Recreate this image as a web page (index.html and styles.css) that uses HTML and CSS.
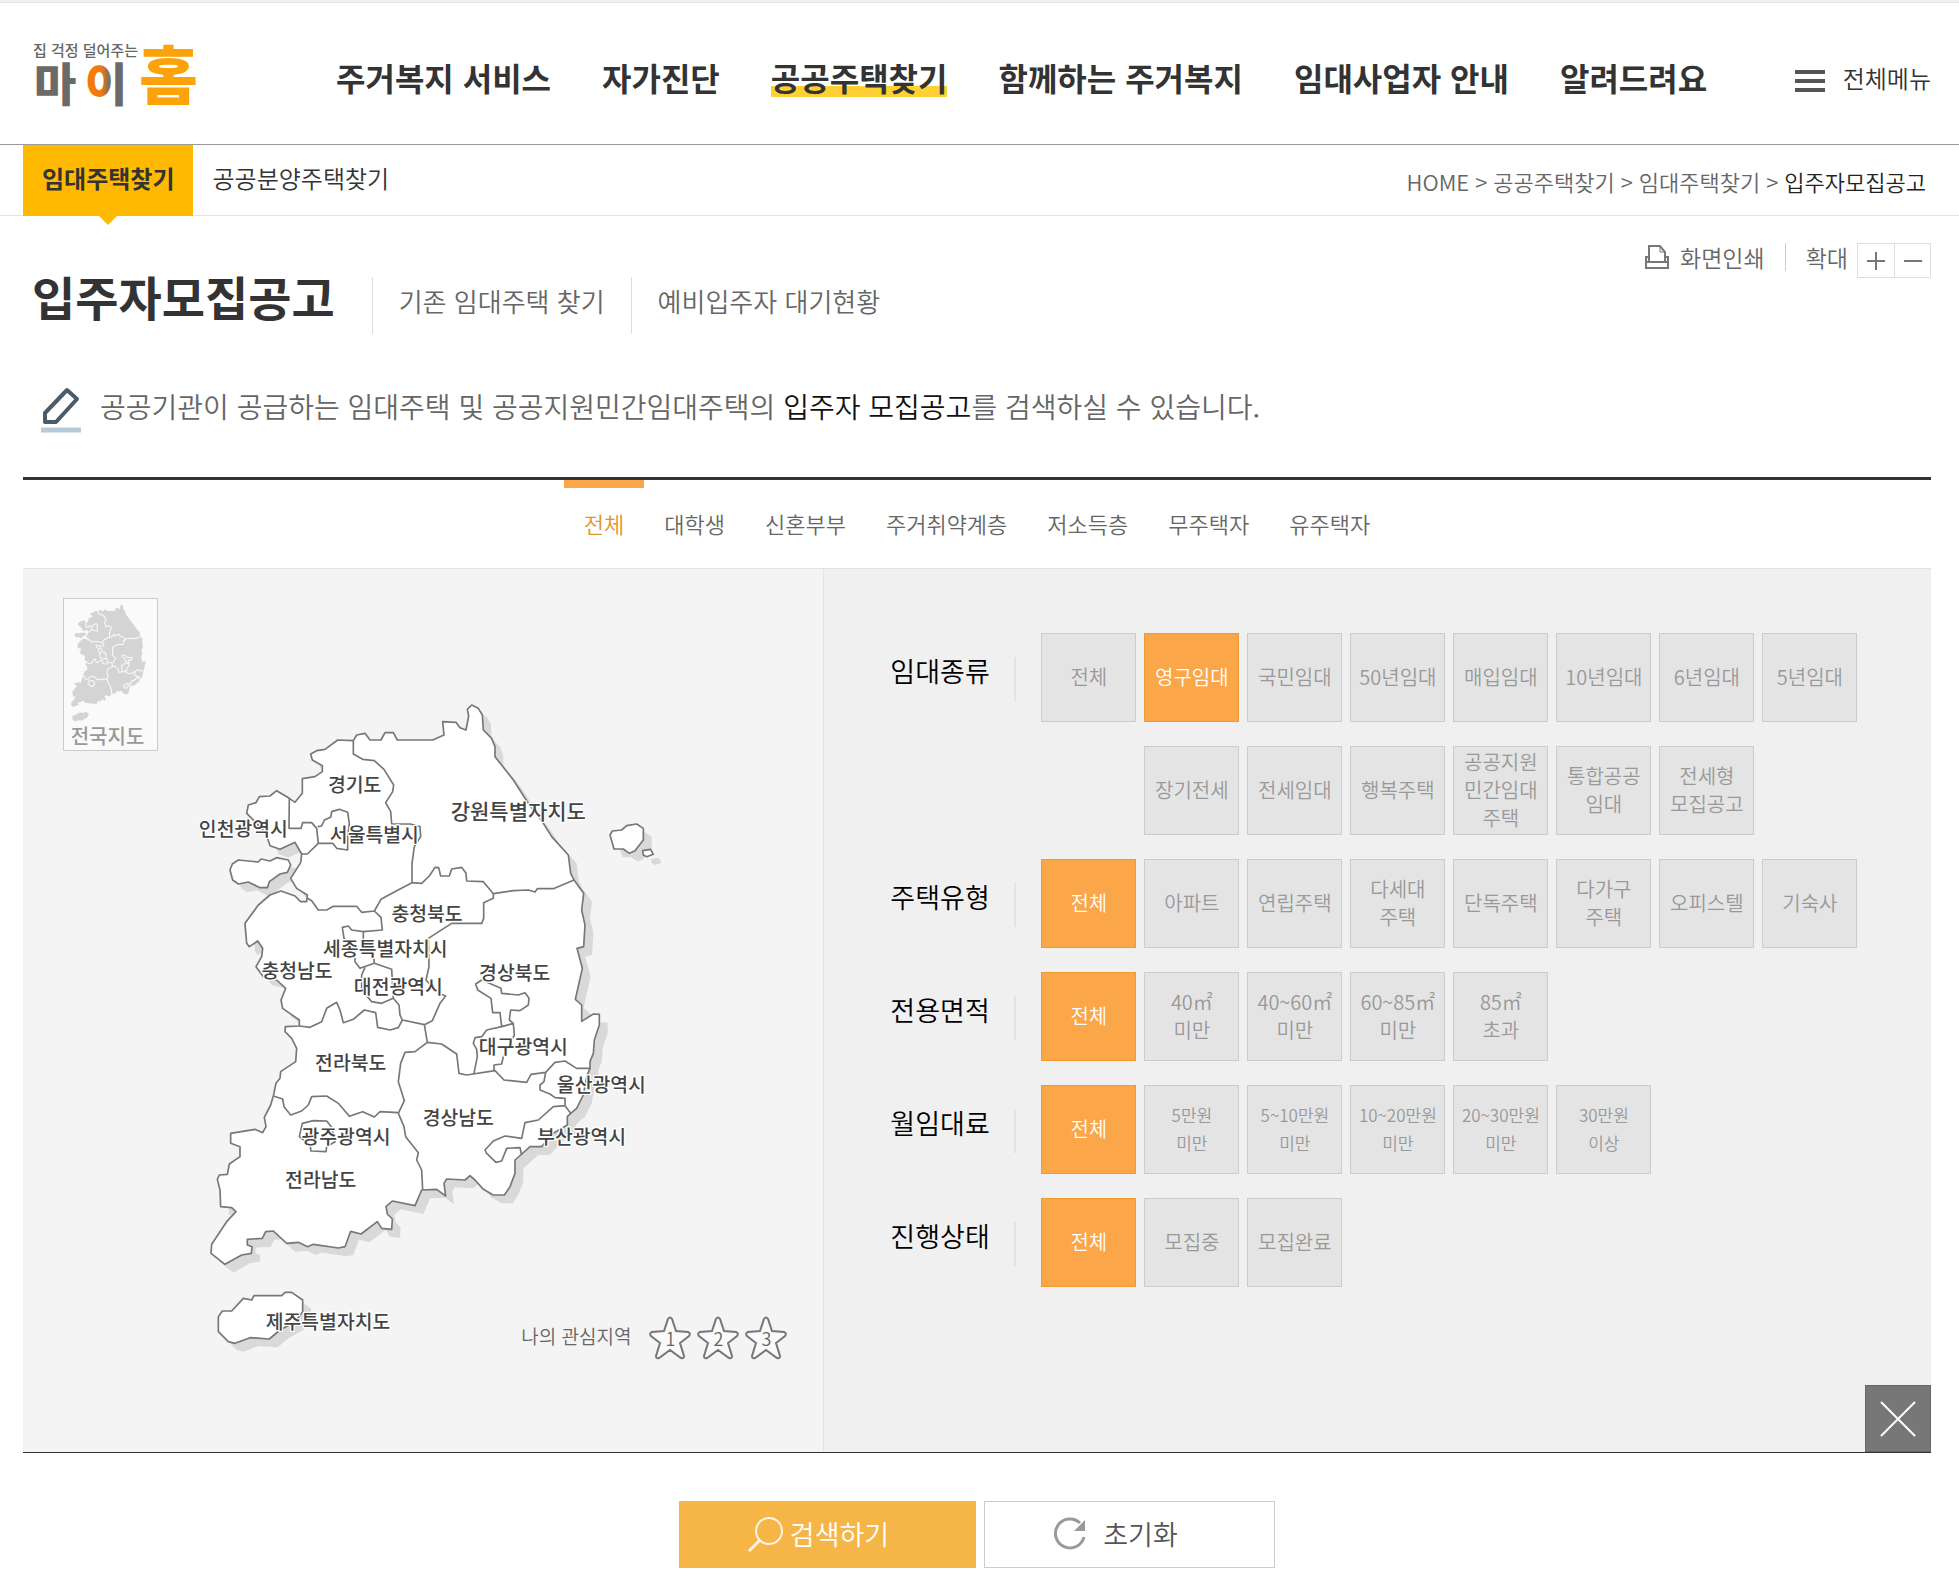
FILE: index.html
```html
<!DOCTYPE html>
<html lang="ko">

<head>
    <meta charset="UTF-8">
    <title>입주자모집공고 | 마이홈</title>
    <link rel="stylesheet" href="styles.css">
</head>

<body>
    <div class="top-strip"></div>

    <header class="header">
        <a href="#" class="logo">
            <svg width="180" height="110" viewBox="0 0 180 110">
                <defs>
                    <linearGradient id="logo-i">
                        <stop offset="0.38" stop-color="#f37a0c" />
                        <stop offset="0.62" stop-color="#6b6a68" />
                    </linearGradient>
                </defs>
                <text x="0" y="37" class="logo-small">집 걱정 덜어주는</text>
                <text x="1" y="82" class="logo-my">마</text>
                <text x="52" y="82" class="logo-my" fill="url(#logo-i)">이</text>
                <text x="106" y="80" class="logo-home">홈</text>
            </svg>
        </a>
        <nav class="gnb">
            <a href="#">주거복지 서비스</a>
            <a href="#">자가진단</a>
            <a href="#" class="on">공공주택찾기</a>
            <a href="#">함께하는 주거복지</a>
            <a href="#">임대사업자 안내</a>
            <a href="#">알려드려요</a>
        </nav>
        <button type="button" class="all-menu"><span class="bars"></span>전체메뉴</button>
    </header>

    <div class="subnav">
        <nav class="lnb">
            <a href="#" class="on">임대주택찾기</a>
            <a href="#">공공분양주택찾기</a>
        </nav>
        <div class="location">
            <a href="#">HOME</a><span>&gt;</span><a href="#">공공주택찾기</a><span>&gt;</span><a href="#">임대주택찾기</a><span>&gt;</span><strong>입주자모집공고</strong>
        </div>
    </div>

    <main class="content">
        <div class="title-area">
            <div class="titles">
                <h1>입주자모집공고</h1>
                <a href="#">기존 임대주택 찾기</a>
                <a href="#">예비입주자 대기현황</a>
            </div>
            <div class="util">
                <button type="button" class="print">
                    <svg width="24" height="24" viewBox="0 0 24 24" fill="none" stroke="#777" stroke-width="2">
                        <path d="M4 16V1h11l5 6v9" />
                        <path d="M15 1v6h5" stroke-width="1" />
                        <path d="M4 12H1v11h22V12h-3M1 17h22" />
                    </svg>
                    화면인쇄
                </button>
                <span class="zoom-label">확대</span>
                <div class="zoom">
                    <button type="button" aria-label="확대"><svg width="18" height="18" viewBox="0 0 18 18" stroke="#777" stroke-width="2"><path d="M0 9h18M9 0v18" /></svg></button>
                    <button type="button" aria-label="축소"><svg width="18" height="18" viewBox="0 0 18 18" stroke="#777" stroke-width="2"><path d="M0 9h18" /></svg></button>
                </div>
            </div>
        </div>

        <div class="desc">
            <svg width="42" height="46" viewBox="0 0 42 46" fill="none">
                <path d="M26 3l10 9L15 35H4V26z" stroke="#4b5b67" stroke-width="4" stroke-linejoin="round" />
                <path d="M0 43h40" stroke="#b6cad7" stroke-width="5" />
            </svg>
            <p>공공기관이 공급하는 임대주택 및 공공지원민간임대주택의 <strong>입주자 모집공고</strong>를 검색하실 수 있습니다.</p>
        </div>

        <div class="target-tabs">
            <button type="button" class="on">전체</button>
            <button type="button">대학생</button>
            <button type="button">신혼부부</button>
            <button type="button">주거취약계층</button>
            <button type="button">저소득층</button>
            <button type="button">무주택자</button>
            <button type="button">유주택자</button>
        </div>

        <div class="search-box">
            <section class="map-area">
                <button type="button" class="mini-map">
                    <svg width="79" height="124" viewBox="0 0 79 124">
                        <g transform="translate(-3 1) scale(0.064 0.061)">
                            <use href="#land" class="mini-land" />
                            <use href="#border" class="mini-border" />
                        </g>
                    </svg>
                    전국지도
                </button>

                <svg class="korea" width="500" height="690" viewBox="0 0 1500 2070">
                    <defs>
                        <path id="land" d="M520 182L530 165 555 160 570 180 603 180 615 158 640 158 652 180 758 180 792 165 788 125 828 127 840 143 858 150 866 108 862 88 875 75 895 85 907 105 910 150 935 175 945 200 945 230 1000 300 1045 370 1090 430 1115 470 1165 525 1172 580 1182 600 1211 640 1205 690 1215 735 1211 800 1191 805 1207 865 1186 958 1205 975 1205 1024 1240 1002 1258 1003 1258 1035 1243 1080 1240 1120 1230 1145 1230 1165 1220 1190 1210 1245 1190 1285 1172 1300 1162 1310 1162 1335 1120 1360 1085 1400 1050 1400 1022 1425 1005 1440 1005 1480 990 1520 973 1545 940 1545 910 1528 885 1500 870 1487 855 1500 800 1497 792 1510 797 1548 770 1528 725 1530 705 1577 637 1563 618 1580 622 1602 637 1617 635 1648 605 1645 592 1625 543 1662 512 1654 495 1700 475 1704 400 1693 383 1700 355 1687 320 1690 280 1653 257 1655 247 1675 202 1678 202 1695 216 1700 214 1720 185 1725 135 1753 93 1720 95 1693 140 1625 168 1595 155 1583 122 1580 120 1530 112 1498 118 1485 142 1483 148 1452 180 1430 180 1400 152 1390 152 1360 225 1348 248 1358 258 1340 253 1312 272 1275 280 1248 288 1210 300 1195 302 1175 347 1145 350 1105 335 1075 315 1055 316 1040 358 1038 358 1020 308 985 303 960 317 925 290 900 250 890 228 860 245 830 248 805 233 783 208 800 200 790 195 730 235 675 270 645 303 633 345 648 362 665 380 665 382 645 350 625 332 595 362 548 365 522 345 487 300 508 270 497 258 460 225 425 200 400 205 375 228 368 238 350 270 348 290 332 328 355 345 367 367 340 367 296 405 290 427 275 427 257 397 240 392 222 410 212 435 208 473 180Z
                            M150 570L157 552 175 540 235 546 243 537 270 543 290 533 325 540 332 555 322 577 300 582 268 605 262 623 240 623 205 606 175 612 158 600Z
                            M115 1910L127 1893 155 1893 190 1855 215 1860 222 1847 305 1847 315 1837 335 1837 368 1860 368 1895 345 1925 300 1950 268 1977 210 1973 165 1990 145 1985 115 1955Z" />
                        <path id="island" d="M1290 465L1297 453 1325 450 1340 437 1370 432 1390 445 1390 480 1365 512 1348 520 1330 507 1302 507Z
                            M1388 512L1412 508 1420 523 1400 530 1390 525Z" />
                        <path id="border" d="M520 182L520 222 548 238 583 242 612 268 641 315 638 335 617 368 632 395 635 432 690 432 720 440 722 470 703 500 696 550 696 608
                            M696 608L650 632 603 658 583 693 545 697 530 679 460 679 440 690 415 690 395 662 382 655
                            M696 608L725 610 748 588 765 562 776 563 782 588 808 588 815 567 845 562 858 580 860 603 910 605 940 641 1000 632 1045 630 1065 636 1072 626 1120 626 1182 600
                            M940 641L940 655 911 668 911 715 905 730 815 730 745 775 747 860 738 900 775 940 797 948 780 970 757 1022 733 1034
                            M583 693L603 712 607 750 550 755 515 750 505 738 487 742 492 775 525 800 525 845 540 865 583 850 580 820 550 790 550 755
                            M583 850L635 868 640 955 605 970 575 965 545 930 545 885 555 862
                            M640 955L657 975 660 1005 667 1020 733 1034 742 1087
                            M358 1038L390 1042 425 1025 440 985 470 967 480 990 490 1028 520 1018 553 990 587 998 593 1042 630 1050 655 1043 667 1020
                            M742 1087L785 1092 830 1122 837 1180 860 1185 945 1172 972 1200 1040 1207 1053 1183 1097 1177 1125 1147 1155 1143 1190 1165 1230 1165
                            M742 1087L705 1115 675 1117 662 1150 655 1205 673 1262 655 1300
                            M280 1248L308 1257 312 1280 332 1305 365 1293 385 1275 395 1250 440 1248 475 1270 508 1309 548 1295 583 1311 600 1295 655 1298
                            M655 1300L672 1340 677 1370 715 1418 710 1440 725 1470 728 1530
                            M358 1370L367 1330 400 1322 440 1323 455 1342 465 1385 440 1400 438 1415 393 1413 390 1395Z
                            M882 1180L892 1130 890 1108 880 1090 885 1073 905 1070 920 1050 965 1040 1000 1030 1003 1065 985 1100 970 1130 965 1152 942 1155 942 1172
                            M965 1040L960 998 938 998 933 955 893 930 887 912 905 900 963 925 965 940 1015 945 1035 938 1047 955 1045 975 1020 992 992 990 988 1020 1000 1030
                            M1097 1177L1092 1205 1080 1215 1080 1230 1110 1242 1125 1253 1155 1255 1155 1277 1172 1300
                            M1155 1277L1120 1280 1075 1320 1035 1328 1025 1375 975 1368 940 1383 915 1410 920 1420 948 1447 965 1443 980 1405 1020 1403 1025 1425
                            M413 440L425 438 433 420 452 412 455 395 478 388 503 397 508 430 503 470 503 510 470 505 458 490 415 490
                            M328 355L327 445 363 445 368 428 395 428 410 445 415 490 382 522 365 522" />
                    </defs>
                    <g transform="translate(25 25)" class="shadow">
                        <use href="#land" />
                        <use href="#island" />
                    </g>
                    <g class="land">
                        <use href="#land" />
                        <use href="#island" />
                        <use href="#border" class="border" />
                    </g>
                    <g class="region">
                        <a href="#"><text x="524" y="337">경기도</text></a>
                        <a href="#"><text x="190" y="467">인천광역시</text></a>
                        <a href="#"><text x="583" y="487">서울특별시</text></a>
                        <a href="#"><text x="1015" y="418" class="wide">강원특별자치도</text></a>
                        <a href="#"><text x="741" y="724">충청북도</text></a>
                        <a href="#"><text x="616" y="827">세종특별자치시</text></a>
                        <a href="#"><text x="351" y="895">충청남도</text></a>
                        <a href="#"><text x="655" y="942">대전광역시</text></a>
                        <a href="#"><text x="1004" y="900">경상북도</text></a>
                        <a href="#"><text x="512" y="1169">전라북도</text></a>
                        <a href="#"><text x="1030" y="1123">대구광역시</text></a>
                        <a href="#"><text x="1264" y="1237">울산광역시</text></a>
                        <a href="#"><text x="835" y="1334">경상남도</text></a>
                        <a href="#"><text x="1205" y="1391">부산광역시</text></a>
                        <a href="#"><text x="498" y="1391">광주광역시</text></a>
                        <a href="#"><text x="422" y="1522">전라남도</text></a>
                        <a href="#"><text x="444" y="1948">제주특별자치도</text></a>
                    </g>
                </svg>

                <div class="favorite">
                    <span>나의 관심지역</span>
                    <button type="button"><svg width="42" height="44" viewBox="0 0 42 44"><path d="M19 3Q21 0 23 3L27 15 39 16Q42 17 40 20L31 27 35 40Q35 43 32 42L21 34 10 42Q7 43 7 40L11 27 2 20Q0 17 3 16L15 15Z" /></svg><b>1</b></button>
                    <button type="button"><svg width="42" height="44" viewBox="0 0 42 44"><path d="M19 3Q21 0 23 3L27 15 39 16Q42 17 40 20L31 27 35 40Q35 43 32 42L21 34 10 42Q7 43 7 40L11 27 2 20Q0 17 3 16L15 15Z" /></svg><b>2</b></button>
                    <button type="button"><svg width="42" height="44" viewBox="0 0 42 44"><path d="M19 3Q21 0 23 3L27 15 39 16Q42 17 40 20L31 27 35 40Q35 43 32 42L21 34 10 42Q7 43 7 40L11 27 2 20Q0 17 3 16L15 15Z" /></svg><b>3</b></button>
                </div>
            </section>

            <section class="filters">
                <div class="filter">
                    <h2>임대종류</h2>
                    <div class="tiles">
                        <button type="button">전체</button>
                        <button type="button" class="on">영구임대</button>
                        <button type="button">국민임대</button>
                        <button type="button">50년임대</button>
                        <button type="button">매입임대</button>
                        <button type="button">10년임대</button>
                        <button type="button">6년임대</button>
                        <button type="button">5년임대</button>
                        <button type="button" class="second">장기전세</button>
                        <button type="button">전세임대</button>
                        <button type="button">행복주택</button>
                        <button type="button">공공지원<br>민간임대<br>주택</button>
                        <button type="button">통합공공<br>임대</button>
                        <button type="button">전세형<br>모집공고</button>
                    </div>
                </div>
                <div class="filter">
                    <h2>주택유형</h2>
                    <div class="tiles">
                        <button type="button" class="on">전체</button>
                        <button type="button">아파트</button>
                        <button type="button">연립주택</button>
                        <button type="button">다세대<br>주택</button>
                        <button type="button">단독주택</button>
                        <button type="button">다가구<br>주택</button>
                        <button type="button">오피스텔</button>
                        <button type="button">기숙사</button>
                    </div>
                </div>
                <div class="filter">
                    <h2>전용면적</h2>
                    <div class="tiles">
                        <button type="button" class="on">전체</button>
                        <button type="button">40㎡<br>미만</button>
                        <button type="button">40~60㎡<br>미만</button>
                        <button type="button">60~85㎡<br>미만</button>
                        <button type="button">85㎡<br>초과</button>
                    </div>
                </div>
                <div class="filter">
                    <h2>월임대료</h2>
                    <div class="tiles rent">
                        <button type="button" class="on">전체</button>
                        <button type="button">5만원<br>미만</button>
                        <button type="button">5~10만원<br>미만</button>
                        <button type="button">10~20만원<br>미만</button>
                        <button type="button">20~30만원<br>미만</button>
                        <button type="button">30만원<br>이상</button>
                    </div>
                </div>
                <div class="filter">
                    <h2>진행상태</h2>
                    <div class="tiles">
                        <button type="button" class="on">전체</button>
                        <button type="button">모집중</button>
                        <button type="button">모집완료</button>
                    </div>
                </div>
                <button type="button" class="close" aria-label="닫기">
                    <svg width="36" height="36" viewBox="0 0 36 36" stroke="#fff" stroke-width="2"><path d="M1 1l34 34M35 1L1 35" /></svg>
                </button>
            </section>
        </div>

        <div class="actions">
            <button type="button" class="search">
                <svg width="36" height="36" viewBox="0 0 36 36" fill="none" stroke="#fff" stroke-opacity="0.85" stroke-width="2"><circle cx="21" cy="15" r="13" /><path d="M12 24L1 35" stroke-width="3" /></svg>
                검색하기
            </button>
            <button type="button" class="reset">
                <svg width="34" height="34" viewBox="0 0 34 34" fill="none" stroke="#999" stroke-width="3"><path d="M31 20A14.500 14.500 0 1 1 27 6" /><path d="M32 3v11H21z" fill="#999" stroke="none" /></svg>
                초기화
            </button>
        </div>
    </main>
</body>

</html>
```

FILE: styles.css
```css
* {
    box-sizing: border-box;
}

body {
    margin: 0;
    background-color: #fff;
    color: #333;
    font-family: "Noto Sans CJK KR", "Liberation Sans", sans-serif;
    font-weight: 350;
}

a {
    color: inherit;
    text-decoration: none;
}

button {
    margin: 0;
    padding: 0;
    border: none;
    background: none;
    color: inherit;
    font: inherit;
    cursor: pointer;
}

h1,
h2,
p {
    margin: 0;
}

svg {
    display: block;
    flex: none;
}

/* header */
.top-strip {
    height: 3px;
    background-color: #f1f1f1;
    border-bottom: 1px solid #e3e3e3;
}

.header {
    display: flex;
    align-items: center;
    height: 142px;
    padding: 0 28px 0 33px;
    border-bottom: 1px solid #999;
}

.logo {
    margin-right: 123px;
}

.logo-small {
    font-size: 15px;
    font-weight: 500;
    fill: #666;
}

.logo-my {
    font-size: 46px;
    font-weight: 900;
}

.logo-my:not([fill]) {
    fill: #6b6a68;
}

.logo-home {
    font-size: 64px;
    font-weight: 900;
    fill: #fda30a;
}

.gnb {
    display: flex;
    gap: 51px;
    padding-top: 6px;
    font-size: 32px;
    font-weight: 700;
    line-height: 40px;
    white-space: nowrap;
}

.gnb .on {
    background: linear-gradient(#ffd034, #ffd034) 0 29px / 100% 11px no-repeat;
}

.all-menu {
    display: flex;
    align-items: center;
    gap: 18px;
    margin-left: auto;
    padding-top: 8px;
    font-size: 24px;
    line-height: 40px;
    white-space: nowrap;
}

.bars {
    width: 30px;
    height: 22px;
    margin-top: 6px;
    border-top: 4px solid #555;
    border-bottom: 4px solid #555;
    background: linear-gradient(#555, #555) 0 5px / 100% 4px no-repeat;
}

.subnav {
    display: flex;
    justify-content: space-between;
    height: 71px;
    padding: 0 33px 0 23px;
    border-bottom: 1px solid #e3e3e3;
}

.lnb {
    display: flex;
    font-size: 24px;
    line-height: 66px;
}

.lnb a {
    height: 71px;
    padding: 0 19px;
}

.lnb .on {
    position: relative;
    background-color: #ffb900;
    font-weight: 700;
}

.lnb .on::after {
    content: "";
    position: absolute;
    top: 100%;
    left: 50%;
    margin-left: -9px;
    border: 9px solid transparent;
    border-top-color: #ffb900;
    border-bottom: none;
}

.location {
    display: flex;
    gap: 6px;
    color: #666;
    font-size: 22px;
    line-height: 72px;
}

.location strong {
    color: #222;
    font-weight: 350;
}

/* title */
.content {
    padding: 27px 28px 18px 23px;
}

.title-area {
    display: flex;
    justify-content: space-between;
}

.titles {
    display: flex;
    padding: 34px 0 0 9px;
}

.titles h1 {
    padding-right: 37px;
    font-size: 47px;
    font-weight: 700;
    line-height: 38px;
}

.titles a {
    height: 57px;
    padding: 0 26px;
    border-left: 1px solid #ddd;
    color: #666;
    font-size: 26px;
    line-height: 48px;
}

.util {
    display: flex;
    height: 35px;
    color: #666;
    font-size: 23px;
    line-height: 28px;
}

.print {
    display: flex;
    align-items: center;
    gap: 11px;
    height: 28px;
}

.zoom-label {
    height: 28px;
    margin-left: 20px;
    padding: 0 9px 0 20px;
    border-left: 1px solid #ccc;
}

.zoom {
    display: flex;
    border: 1px solid #ddd;
}

.zoom button {
    display: flex;
    align-items: center;
    justify-content: center;
    width: 36px;
}

.zoom button + button {
    border-left: 1px solid #ddd;
}

.desc {
    display: flex;
    gap: 17px;
    margin: 53px 0 44px;
    padding-left: 18px;
    color: #666;
    font-size: 28px;
    line-height: 38px;
}

.desc strong {
    color: #111;
    font-weight: 350;
}

/* tabs */
.target-tabs {
    display: flex;
    justify-content: center;
    height: 92px;
    border-top: 3px solid #333;
    border-bottom: 1px solid #e3e3e3;
    color: #666;
    font-size: 22px;
}

.target-tabs button {
    padding: 0 20px 2px;
    border-top: 8px solid transparent;
    border-bottom: 8px solid transparent;
}

.target-tabs .on {
    border-top-color: #fba648;
    color: #e0952a;
}

/* map */
.search-box {
    display: flex;
    border-bottom: 1px solid #333;
    background-color: #f0f0f0;
}

.map-area {
    position: relative;
    display: flex;
    align-items: flex-start;
    width: 42%;
    padding: 29px 0 82px 40px;
    border-right: 1px solid #e3e3e3;
    background-color: #f4f4f4;
}

.mini-map {
    width: 95px;
    height: 153px;
    padding: 0 10px 2px 4px;
    border: 1px solid #ccc;
    background-color: #fafafa;
    color: #999;
    font-size: 20px;
    font-weight: 500;
    line-height: 26px;
}

.mini-land {
    fill: #d4d4d4;
}

.mini-border {
    fill: none;
    stroke: #fafafa;
    stroke-width: 16;
}

.korea {
    margin: 82px 0 0 22px;
}

.shadow {
    fill: #d9d9d9;
}

.land {
    fill: #fff;
    stroke: #777;
    stroke-width: 5;
    stroke-linejoin: round;
}

.border {
    fill: none;
}

.region {
    fill: #444;
    stroke: #fff;
    stroke-width: 8;
    stroke-linejoin: round;
    paint-order: stroke;
    font-size: 58px;
    font-weight: 500;
    text-anchor: middle;
}

.region .wide {
    font-size: 63px;
}

.favorite {
    position: absolute;
    right: 36px;
    bottom: 92px;
    display: flex;
    align-items: center;
    gap: 6px;
    color: #666;
    font-size: 19px;
    line-height: 36px;
}

.favorite span {
    margin-right: 12px;
    padding-bottom: 4px;
}

.favorite button {
    display: grid;
    place-items: center;
}

.favorite svg,
.favorite b {
    grid-area: 1 / 1;
}

.favorite path {
    fill: #fafafa;
    stroke: #777;
    stroke-width: 2;
}

.favorite b {
    font-size: 18px;
    font-weight: 350;
}

/* filters */
.filters {
    display: flex;
    flex: 1;
    flex-direction: column;
    gap: 24px;
    padding: 64px 0 0 66px;
}

.filter {
    display: flex;
}

.filter h2 {
    width: 126px;
    height: 44px;
    margin: 24px 25px 0 0;
    border-right: 2px solid #e3e3e3;
    color: #000;
    font-size: 27px;
    font-weight: 350;
    line-height: 28px;
}

.tiles {
    display: grid;
    grid-template-columns: repeat(8, 95px);
    grid-auto-rows: 89px;
    gap: 24px 8px;
}

.tiles button {
    padding-bottom: 2px;
    border: 1px solid #ccc;
    background-color: #e4e4e4;
    color: #999;
    font-size: 20px;
    line-height: 28px;
    white-space: nowrap;
}

.tiles .second {
    grid-column: 2;
}

.tiles .on {
    border-color: #f09a32;
    background-color: #fba648;
    color: #fff;
}

.rent button:not(.on) {
    font-size: 17px;
}

.close {
    display: flex;
    align-items: center;
    justify-content: center;
    width: 66px;
    height: 67px;
    margin: auto 0 0 auto;
    border: 1px solid #666;
    background-color: #777;
}

/* buttons */
.actions {
    display: flex;
    justify-content: center;
    gap: 8px;
    margin-top: 48px;
    font-size: 27px;
    line-height: 36px;
}

.actions button {
    display: flex;
    align-items: center;
    justify-content: center;
    height: 67px;
    padding-bottom: 2px;
}

.actions .search {
    gap: 6px;
    width: 297px;
    padding-right: 18px;
    background-color: #f5b647;
    color: #fff;
}

.actions .reset {
    gap: 16px;
    width: 291px;
    padding-right: 28px;
    border: 1px solid #ccc;
    color: #555;
}
```
